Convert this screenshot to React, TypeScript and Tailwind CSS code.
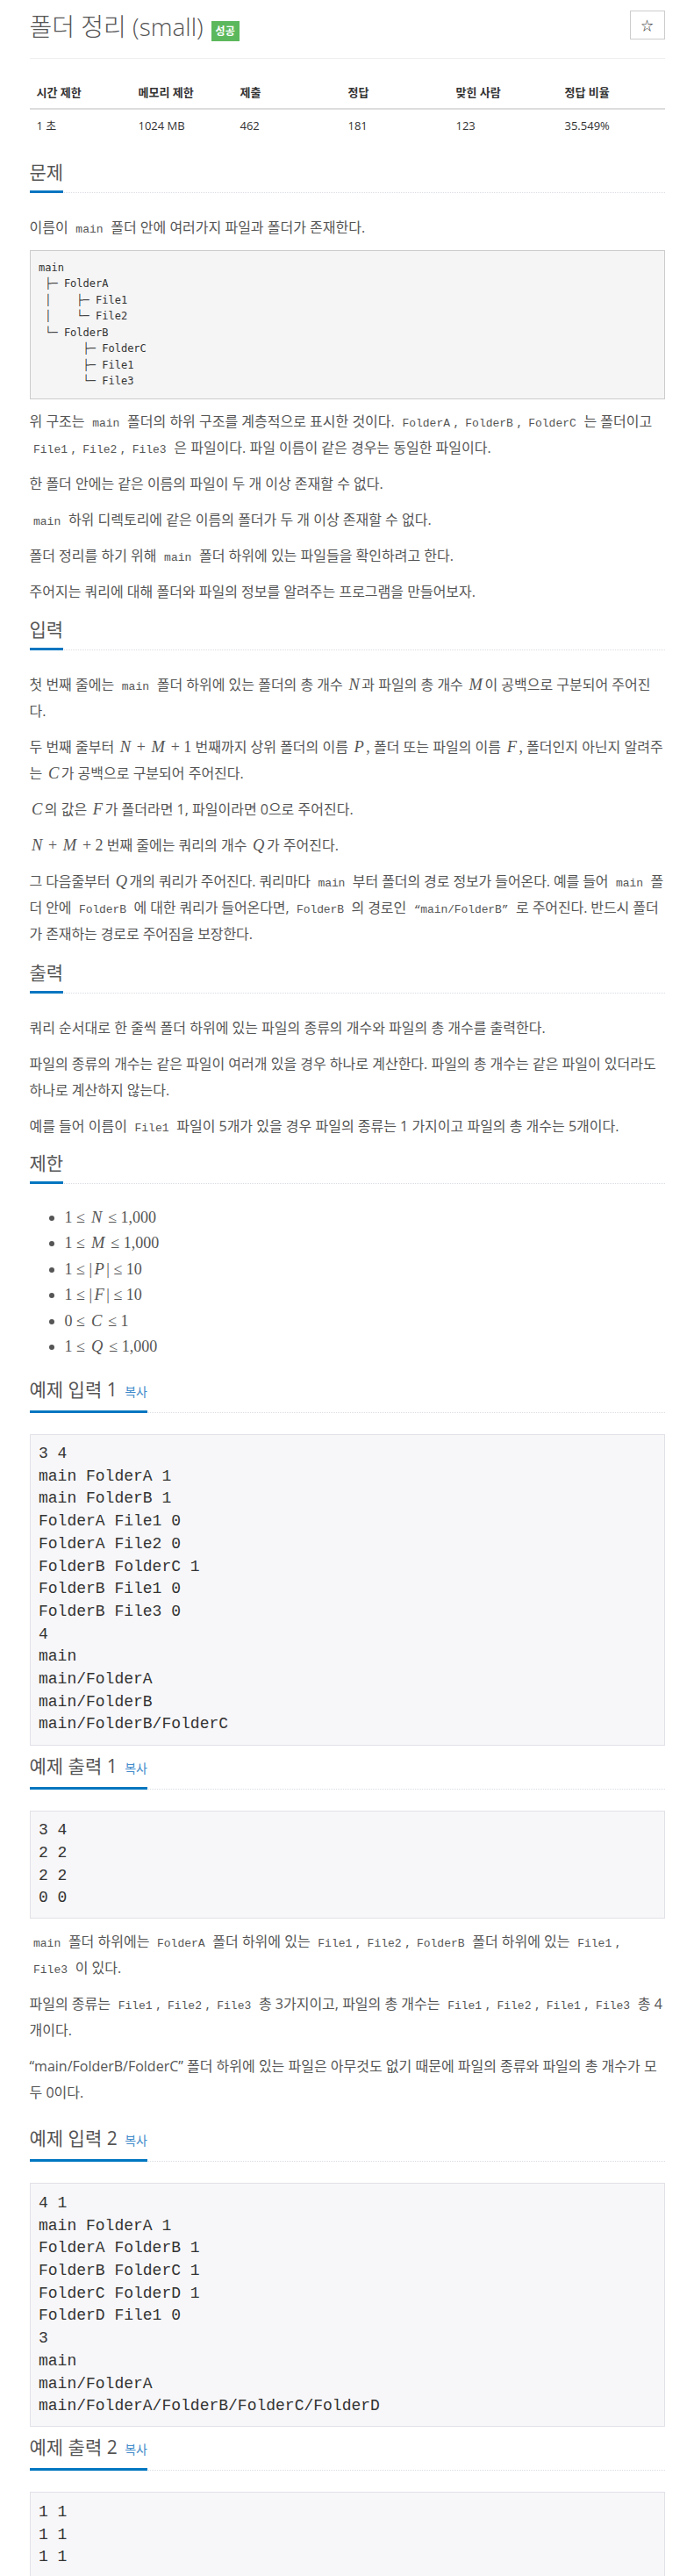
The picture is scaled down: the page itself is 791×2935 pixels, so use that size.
import React from "react";

const sans = "font-['Open_Sans','Noto_Sans_CJK_KR',sans-serif]";

function Code({ children }: { children: React.ReactNode }) {
  return (
    <code className="px-[4.5px] font-['Liberation_Mono',monospace] text-[13px] leading-none text-[#555]">
      {children}
    </code>
  );
}

function V({ children }: { children: React.ReactNode }) {
  return <span className="px-[2.5px] font-['Liberation_Serif',serif] text-[18.5px] leading-none italic">{children}</span>;
}

function R({ children }: { children: React.ReactNode }) {
  return <span className="font-['Liberation_Serif',serif] text-[18px] leading-none">{children}</span>;
}

function Headline({ children, className = "" }: { children: React.ReactNode; className?: string }) {
  return (
    <div className={`mb-[24px] flex border-b border-dotted border-[#d9dde3] ${className}`}>
      <h2 className="-mb-px border-b-[3px] border-[#0076c0] pb-[9px] text-[21px] leading-[24px] text-[#555]">
        {children}
      </h2>
    </div>
  );
}

function CopyLink() {
  return <a className="ml-[3px] text-[14px] text-[#428bca]">복사</a>;
}

function SamplePre({ lines }: { lines: string[] }) {
  return (
    <pre className="mb-[11px] border border-[#e1e1e8] bg-[#f7f7f9] p-[9.5px] font-['Liberation_Mono',monospace] text-[18px] leading-[25.71px] text-[#333]">
      {lines.join("\n")}
    </pre>
  );
}

const stats = [
  { head: "시간 제한", value: "1 초", w: "w-[116px]" },
  { head: "메모리 제한", value: "1024 MB", w: "w-[116px]" },
  { head: "제출", value: "462", w: "w-[123px]" },
  { head: "정답", value: "181", w: "w-[123px]" },
  { head: "맞힌 사람", value: "123", w: "w-[124px]" },
  { head: "정답 비율", value: "35.549%", w: "w-[122px]" },
];

const tree = [
  "main",
  " ├─ FolderA",
  " │    ├─ File1",
  " │    └─ File2",
  " └─ FolderB",
  "       ├─ FolderC",
  "       ├─ File1",
  "       └─ File3",
];

const limits: [string, string, string][] = [
  ["1 ≤ ", "N", " ≤ 1,000"],
  ["1 ≤ ", "M", " ≤ 1,000"],
  ["1 ≤ |", "P", "| ≤ 10"],
  ["1 ≤ |", "F", "| ≤ 10"],
  ["0 ≤ ", "C", " ≤ 1"],
  ["1 ≤ ", "Q", " ≤ 1,000"],
];

export default function App() {
  return (
    <div className={`min-h-screen bg-white text-[#555] ${sans}`}>
      <div className="mx-auto w-[724px]">
        {/* title */}
        <div className="flex items-start justify-between border-b border-[#eee] pb-[18px] pt-[12px]">
          <h1 className="flex items-end text-[28px] font-light leading-[36px] text-[#555]">
            <span>폴더 정리 (small)</span>
            <span className="mb-[1px] ml-[9px] flex h-[23px] items-center bg-[#5cb85c] px-[5px] text-[12px] font-bold leading-none text-white">
              성공
            </span>
          </h1>
          <button className="flex h-[33px] w-[40px] items-center justify-center border border-[#ccc] bg-white text-[14px] text-[#333]">
            ☆
          </button>
        </div>

        {/* stats table */}
        <table className="mb-[23px] mt-[20px] w-full table-fixed border-collapse text-[#333]">
          <thead>
            <tr className="border-b-2 border-[#ddd]">
              {stats.map((s) => (
                <th key={s.head} className={`${s.w} px-[8px] py-[8px] text-left text-[13px] font-bold leading-[20px]`}>
                  {s.head}
                </th>
              ))}
            </tr>
          </thead>
          <tbody>
            <tr>
              {stats.map((s) => (
                <td key={s.head} className="px-[8px] py-[8px] text-[13px] leading-[20px]">
                  {s.value}
                </td>
              ))}
            </tr>
          </tbody>
        </table>

        <div className="text-[16px] leading-[30px] [&_p]:mb-[11px]">
          {/* 문제 */}
          <Headline>문제</Headline>
          <p>
            이름이 <Code>main</Code> 폴더 안에 여러가지 파일과 폴더가 존재한다.
          </p>
          <pre className="mb-[10px] border border-[#ccc] bg-[#f5f5f5] p-[9.5px] font-['DejaVu_Sans_Mono',monospace] text-[12px] leading-[18.57px] text-[#333]">
            {tree.join("\n")}
          </pre>
          <p>
            위 구조는 <Code>main</Code> 폴더의 하위 구조를 계층적으로 표시한 것이다. <Code>FolderA</Code>, <Code>FolderB</Code>,{" "}
            <Code>FolderC</Code> 는 폴더이고 <Code>File1</Code>, <Code>File2</Code>, <Code>File3</Code> 은 파일이다. 파일 이름이
            같은 경우는 동일한 파일이다.
          </p>
          <p>한 폴더 안에는 같은 이름의 파일이 두 개 이상 존재할 수 없다.</p>
          <p>
            <Code>main</Code> 하위 디렉토리에 같은 이름의 폴더가 두 개 이상 존재할 수 없다.
          </p>
          <p>
            폴더 정리를 하기 위해 <Code>main</Code> 폴더 하위에 있는 파일들을 확인하려고 한다.
          </p>
          <p>주어지는 쿼리에 대해 폴더와 파일의 정보를 알려주는 프로그램을 만들어보자.</p>

          {/* 입력 */}
          <Headline className="mt-[16px]">입력</Headline>
          <p>
            첫 번째 줄에는 <Code>main</Code> 폴더 하위에 있는 폴더의 총 개수 <V>N</V>과 파일의 총 개수 <V>M</V>이 공백으로
            구분되어 주어진다.
          </p>
          <p>
            두 번째 줄부터 <V>N</V> <R>+</R> <V>M</V> <R>+ 1</R> 번째까지 상위 폴더의 이름 <V>P</V>
            <R>,</R> 폴더 또는 파일의 이름 <V>F</V>
            <R>,</R> 폴더인지 아닌지 알려주는 <V>C</V>가 공백으로 구분되어 주어진다.
          </p>
          <p>
            <V>C</V>의 값은 <V>F</V>가 폴더라면 1, 파일이라면 0으로 주어진다.
          </p>
          <p>
            <V>N</V> <R>+</R> <V>M</V> <R>+ 2</R> 번째 줄에는 쿼리의 개수 <V>Q</V>가 주어진다.
          </p>
          <p className="tracking-[-0.1px]">
            그 다음줄부터 <V>Q</V>개의 쿼리가 주어진다. 쿼리마다 <Code>main</Code> 부터 폴더의 경로 정보가 들어온다. 예를 들어{" "}
            <Code>main</Code> 폴더 안에 <Code>FolderB</Code> 에 대한 쿼리가 들어온다면, <Code>FolderB</Code> 의 경로인{" "}
            <Code>“main/FolderB”</Code> 로 주어진다. 반드시 폴더가 존재하는 경로로 주어짐을 보장한다.
          </p>

          {/* 출력 */}
          <Headline className="mt-[17px]">출력</Headline>
          <p>쿼리 순서대로 한 줄씩 폴더 하위에 있는 파일의 종류의 개수와 파일의 총 개수를 출력한다.</p>
          <p>
            파일의 종류의 개수는 같은 파일이 여러개 있을 경우 하나로 계산한다. 파일의 총 개수는 같은 파일이 있더라도 하나로
            계산하지 않는다.
          </p>
          <p>
            예를 들어 이름이 <Code>File1</Code> 파일이 5개가 있을 경우 파일의 종류는 1 가지이고 파일의 총 개수는 5개이다.
          </p>

          {/* 제한 */}
          <Headline className="mt-[15px]">제한</Headline>
          <ul className="mb-[11px] list-disc pl-[40px] marker:text-[#555]">
            {limits.map(([a, v, b]) => (
              <li key={a + v + b} className="leading-[29.5px]">
                <R>{a}</R>
                <V>{v}</V>
                <R>{b}</R>
              </li>
            ))}
          </ul>

          {/* 예제 입력 1 */}
          <Headline className="mt-[21px]">
            예제 입력 1 <CopyLink />
          </Headline>
          <SamplePre
            lines={[
              "3 4",
              "main FolderA 1",
              "main FolderB 1",
              "FolderA File1 0",
              "FolderA File2 0",
              "FolderB FolderC 1",
              "FolderB File1 0",
              "FolderB File3 0",
              "4",
              "main",
              "main/FolderA",
              "main/FolderB",
              "main/FolderB/FolderC",
            ]}
          />

          {/* 예제 출력 1 */}
          <Headline className="mt-[11px]">
            예제 출력 1 <CopyLink />
          </Headline>
          <SamplePre lines={["3 4", "2 2", "2 2", "0 0"]} />
          <p>
            <Code>main</Code> 폴더 하위에는 <Code>FolderA</Code> 폴더 하위에 있는 <Code>File1</Code>, <Code>File2</Code>,{" "}
            <Code>FolderB</Code> 폴더 하위에 있는 <Code>File1</Code>, <Code>File3</Code> 이 있다.
          </p>
          <p>
            파일의 종류는 <Code>File1</Code>, <Code>File2</Code>, <Code>File3</Code> 총 3가지이고, 파일의 총 개수는{" "}
            <Code>File1</Code>, <Code>File2</Code>, <Code>File1</Code>, <Code>File3</Code> 총 4개이다.
          </p>
          <p>“main/FolderB/FolderC” 폴더 하위에 있는 파일은 아무것도 없기 때문에 파일의 종류와 파일의 총 개수가 모두 0이다.</p>

          {/* 예제 입력 2 */}
          <Headline className="mt-[25px]">
            예제 입력 2 <CopyLink />
          </Headline>
          <SamplePre
            lines={[
              "4 1",
              "main FolderA 1",
              "FolderA FolderB 1",
              "FolderB FolderC 1",
              "FolderC FolderD 1",
              "FolderD File1 0",
              "3",
              "main",
              "main/FolderA",
              "main/FolderA/FolderB/FolderC/FolderD",
            ]}
          />

          {/* 예제 출력 2 */}
          <Headline className="mt-[11px]">
            예제 출력 2 <CopyLink />
          </Headline>
          <SamplePre lines={["1 1", "1 1", "1 1"]} />
        </div>
      </div>
    </div>
  );
}
